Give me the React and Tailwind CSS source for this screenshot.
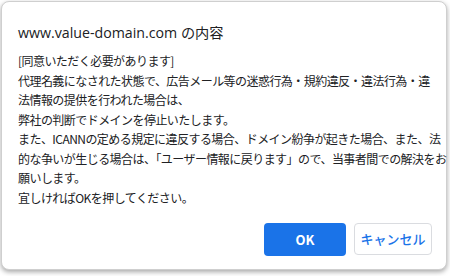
export default function App() {
  const lines = [
    '[同意いただく必要があります]',
    '代理名義になされた状態で、広告メール等の迷惑行為・規約違反・違法行為・違',
    '法情報の提供を行われた場合は、',
    '弊社の判断でドメインを停止いたします。',
    'また、ICANNの定める規定に違反する場合、ドメイン紛争が起きた場合、また、法',
    '的な争いが生じる場合は、「ユーザー情報に戻ります」ので、当事者間での解決をお',
    '願いします。',
    '宜しければOKを押してください。',
  ];

  return (
    <div className="w-[450px] h-[276px] bg-white overflow-hidden">
      <div className="ml-[1px] mt-[1px] w-[446px] h-[269px] flex flex-col rounded-lg border border-[#cfcfcf] bg-white shadow-[0_2px_5px_rgba(0,0,0,0.35)]">
        <div
          className="pl-[16px] pt-[21px] text-[14.2px] leading-[20px] text-[#202124]"
          style={{ fontFamily: '"Open Sans", "Noto Sans CJK JP", sans-serif' }}
        >
          www.value-domain.com の内容
        </div>
        <div
          className="pl-[16px] pt-[8px] text-[12px] leading-[19.5px] tracking-[-0.55px] text-[#202124] whitespace-nowrap"
          style={{ fontFamily: '"Noto Sans CJK JP", sans-serif' }}
        >
          {lines.map((l) => (
            <div key={l}>{l}</div>
          ))}
        </div>
        <div
          className="mt-auto flex justify-end gap-2 pr-[14px] pb-[13px]"
          style={{ fontFamily: '"Noto Sans CJK JP", sans-serif' }}
        >
          <button className="w-[82px] h-[33px] rounded-[4px] bg-[#1a73e8] text-white text-[13px] font-bold">
            OK
          </button>
          <button className="w-[78px] h-[32px] rounded-[4px] border border-[#dadce0] bg-white text-[#1a73e8] text-[13px] font-medium">
            キャンセル
          </button>
        </div>
      </div>
    </div>
  );
}
